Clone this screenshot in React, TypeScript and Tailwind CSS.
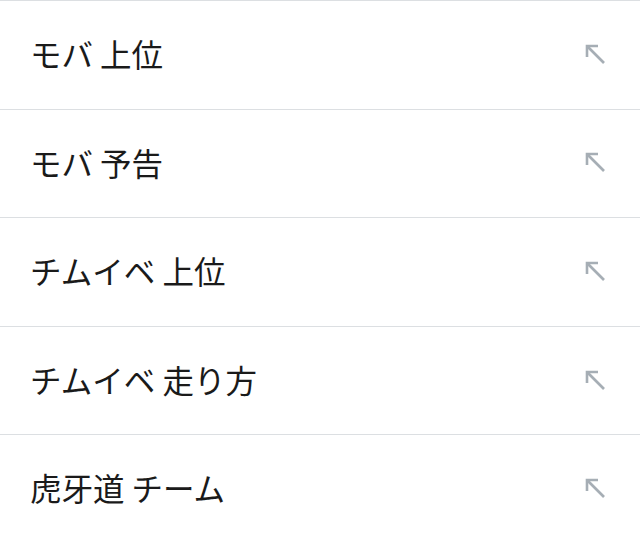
const items = ['モバ 上位', 'モバ 予告', 'チムイベ 上位', 'チムイベ 走り方', '虎牙道 チーム'];

function ArrowIcon() {
  return (
    <svg width="24" height="24" viewBox="0 0 24 24" fill="none" stroke="currentColor" strokeWidth="2.6" strokeLinecap="butt" strokeLinejoin="miter">
      <path d="M3 14V3h11" />
      <path d="M3 3l17 17" />
    </svg>
  );
}

export default function App() {
  return (
    <div className="w-[640px] h-[535px] overflow-hidden bg-white border-t border-[#dcdfe2]" style={{ fontFamily: '"Noto Sans CJK JP", "Noto Sans", sans-serif' }}>
      {items.map(t => (
        <div key={t} className="h-[108.6px] flex items-center justify-between border-b border-[#dcdfe2] pl-[30px] pr-[32px] shrink-0">
          <span className="text-[31.5px] text-[#1a1a1a] leading-none -mt-[2px]">{t}</span>
          <span className="text-[#a6aeb5]"><ArrowIcon /></span>
        </div>
      ))}
    </div>
  );
}
